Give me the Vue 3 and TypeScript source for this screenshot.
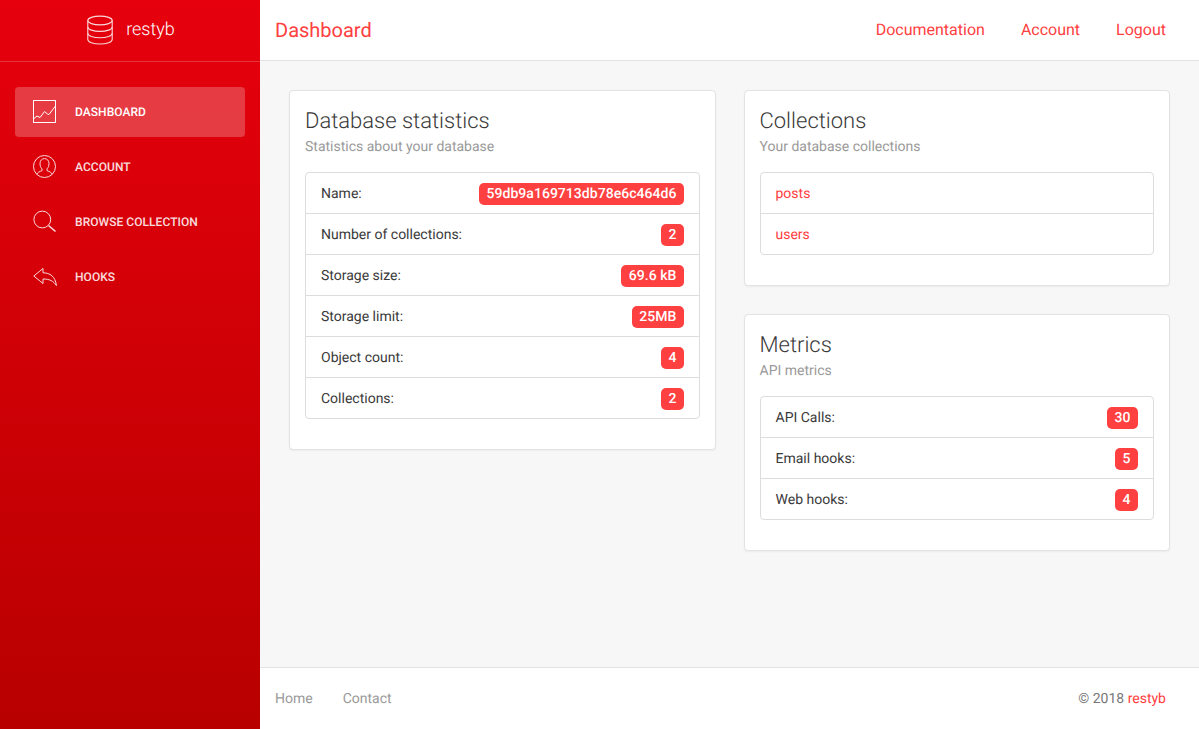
<script setup lang="ts">
interface Row {
  label: string;
  value: string;
}

const navItems = [
  { label: "Dashboard", icon: "chart", active: true },
  { label: "Account", icon: "user", active: false },
  { label: "Browse collection", icon: "search", active: false },
  { label: "Hooks", icon: "reply", active: false },
];

const stats: Row[] = [
  { label: "Name:", value: "59db9a169713db78e6c464d6" },
  { label: "Number of collections:", value: "2" },
  { label: "Storage size:", value: "69.6 kB" },
  { label: "Storage limit:", value: "25MB" },
  { label: "Object count:", value: "4" },
  { label: "Collections:", value: "2" },
];

const metrics: Row[] = [
  { label: "API Calls:", value: "30" },
  { label: "Email hooks:", value: "5" },
  { label: "Web hooks:", value: "4" },
];

const collections = ["posts", "users"];
</script>

<template>
  <div class="wrapper">
    <aside class="sidebar">
      <div class="brand">
        <svg class="brand_icon" viewBox="0 0 26 30" fill="none" stroke="currentColor" stroke-width="1.1">
          <ellipse cx="13" cy="5.5" rx="12.2" ry="4.4" />
          <path d="M0.8 5.5V24.5C0.8 27 6.2 29 13 29S25.2 27 25.2 24.5V5.5" />
          <path d="M0.8 12C0.8 14.5 6.2 16.4 13 16.4S25.2 14.5 25.2 12" />
          <path d="M0.8 18.3C0.8 20.8 6.2 22.7 13 22.7S25.2 20.8 25.2 18.3" />
        </svg>
        <span>restyb</span>
      </div>
      <nav class="nav">
        <a v-for="item in navItems" :key="item.label" class="nav_item" :class="{ active: item.active }">
          <svg class="nav_icon" viewBox="0 0 24 24" fill="none" stroke="currentColor" stroke-width="1">
            <template v-if="item.icon === 'chart'">
              <rect x="0.5" y="0.5" width="22" height="22" />
              <path d="M0.5 19L4 16L7 17.5L11.5 11.5L14.5 14L16 14.5L22.5 6" />
            </template>
            <template v-else-if="item.icon === 'user'">
              <circle cx="11.5" cy="11.5" r="11" />
              <path d="M3.8 19.3C4.6 17.2 6.6 16.6 9 15.7V13.8C7.6 12.5 7 10.7 7 8.6C7 5.6 8.8 3.6 11.5 3.6S16 5.6 16 8.6C16 10.7 15.4 12.5 14 13.8V15.7C16.4 16.6 18.4 17.2 19.2 19.3" />
            </template>
            <template v-else-if="item.icon === 'search'">
              <circle cx="9.3" cy="9.5" r="8.4" />
              <path d="M15.5 15.5L22.5 21.5" stroke-width="1.6" />
            </template>
            <template v-else>
              <path d="M0.8 11L10 3.5V7.8C17 7.8 22.3 11.5 23.4 20.5C20.5 16 16.5 14 10 14V18.5Z" />
            </template>
          </svg>
          <span>{{ item.label }}</span>
        </a>
      </nav>
    </aside>

    <div class="main">
      <header class="header">
        <span class="page_title">Dashboard</span>
        <div class="header_links">
          <a>Documentation</a>
          <a>Account</a>
          <a>Logout</a>
        </div>
      </header>

      <main class="content">
        <div class="column">
          <section class="card">
            <h4>Database statistics</h4>
            <p>Statistics about your database</p>
            <ul class="list">
              <li v-for="row in stats" :key="row.label">
                <span>{{ row.label }}</span>
                <span class="badge">{{ row.value }}</span>
              </li>
            </ul>
          </section>
        </div>
        <div class="column">
          <section class="card">
            <h4>Collections</h4>
            <p>Your database collections</p>
            <ul class="list">
              <li v-for="name in collections" :key="name" class="link_row">{{ name }}</li>
            </ul>
          </section>
          <section class="card">
            <h4>Metrics</h4>
            <p>API metrics</p>
            <ul class="list">
              <li v-for="row in metrics" :key="row.label">
                <span>{{ row.label }}</span>
                <span class="badge">{{ row.value }}</span>
              </li>
            </ul>
          </section>
        </div>
      </main>

      <footer class="footer">
        <div class="footer_links">
          <a>Home</a>
          <a>Contact</a>
        </div>
        <span class="copyright">© 2018 <a>restyb</a></span>
      </footer>
    </div>
  </div>
</template>

<style>
html,
body {
  margin: 0;
  height: 100%;
}
</style>

<style scoped>
.wrapper {
  display: flex;
  height: 729px;
  overflow: hidden;
  font-family: Roboto, "Liberation Sans", sans-serif;
  font-size: 14px;
  color: #3a3a3a;
  text-rendering: geometricPrecision;
}

.sidebar {
  width: 260px;
  flex-shrink: 0;
  background: linear-gradient(to bottom, #e6000d 0%, #b80000 100%);
  color: #ffffff;
}

.brand {
  height: 62px;
  box-sizing: border-box;
  border-bottom: 1px solid rgba(255, 255, 255, 0.2);
  display: flex;
  align-items: center;
  justify-content: center;
  gap: 13px;
  padding: 0 0 2px 2px;
  font-size: 18px;
  font-weight: 300;
}

.brand_icon {
  width: 26px;
  height: 30px;
  opacity: 0.85;
}

.nav {
  padding: 25px 15px 0;
  display: flex;
  flex-direction: column;
  gap: 5px;
}

.nav_item {
  height: 50px;
  display: flex;
  align-items: center;
  padding-left: 18px;
  gap: 18px;
  border-radius: 4px;
  font-size: 12px;
  font-weight: 500;
  letter-spacing: 0.05px;
  text-transform: uppercase;
  opacity: 0.86;
}

.nav_item.active {
  background: rgba(255, 255, 255, 0.23);
  opacity: 1;
}

.nav_icon {
  width: 24px;
  height: 24px;
  flex-shrink: 0;
}

.main {
  flex: 1;
  min-width: 0;
  display: flex;
  flex-direction: column;
  background: #f7f7f7;
}

.header {
  height: 61px;
  box-sizing: border-box;
  flex-shrink: 0;
  background: #ffffff;
  border-bottom: 1px solid #e3e3e3;
  display: flex;
  align-items: center;
  justify-content: space-between;
  padding: 0 33px 1px 15px;
  color: #ff4040;
}

.page_title {
  font-size: 20px;
  font-weight: 400;
}

.header_links {
  display: flex;
  gap: 36px;
  font-size: 16px;
  font-weight: 400;
}

.content {
  flex: 1;
  display: grid;
  grid-template-columns: 427px 426.5px;
  column-gap: 27.5px;
  padding: 29px 29px 0;
  align-items: start;
}

.column {
  display: flex;
  flex-direction: column;
  gap: 28px;
}

.card {
  background: #ffffff;
  border: 1px solid #e3e3e3;
  border-radius: 4px;
  box-shadow: 0 1px 2px rgba(0, 0, 0, 0.05);
  padding: 16px 15px 30px;
}

.card h4 {
  margin: 0;
  font-size: 22px;
  line-height: 30px;
  font-weight: 300;
}

.card p {
  margin: 0 0 15px;
  font-size: 14px;
  line-height: 20px;
  font-weight: 400;
  color: #9a9a9a;
}

.list {
  margin: 0;
  padding: 0;
  list-style: none;
  border: 1px solid #dddddd;
  border-radius: 4px;
}

.list li {
  height: 38px;
  display: flex;
  align-items: center;
  justify-content: space-between;
  padding: 2px 15px 0;
}

.list li + li {
  border-top: 1px solid #dddddd;
}

.link_row {
  color: #ff4040;
}

.badge {
  background: #ff4040;
  color: #ffffff;
  font-size: 14px;
  font-weight: 500;
  line-height: 22px;
  letter-spacing: 0.04px;
  padding: 0 7.5px;
  border-radius: 5px;
}

.footer {
  height: 62px;
  box-sizing: border-box;
  flex-shrink: 0;
  background: #ffffff;
  border-top: 1px solid #e3e3e3;
  display: flex;
  align-items: center;
  justify-content: space-between;
  padding: 0 33px 0 15px;
  color: #9a9a9a;
}

.footer_links {
  display: flex;
  gap: 30px;
}

.copyright {
  color: #777777;
}

.copyright a {
  color: #ff4040;
}
</style>
